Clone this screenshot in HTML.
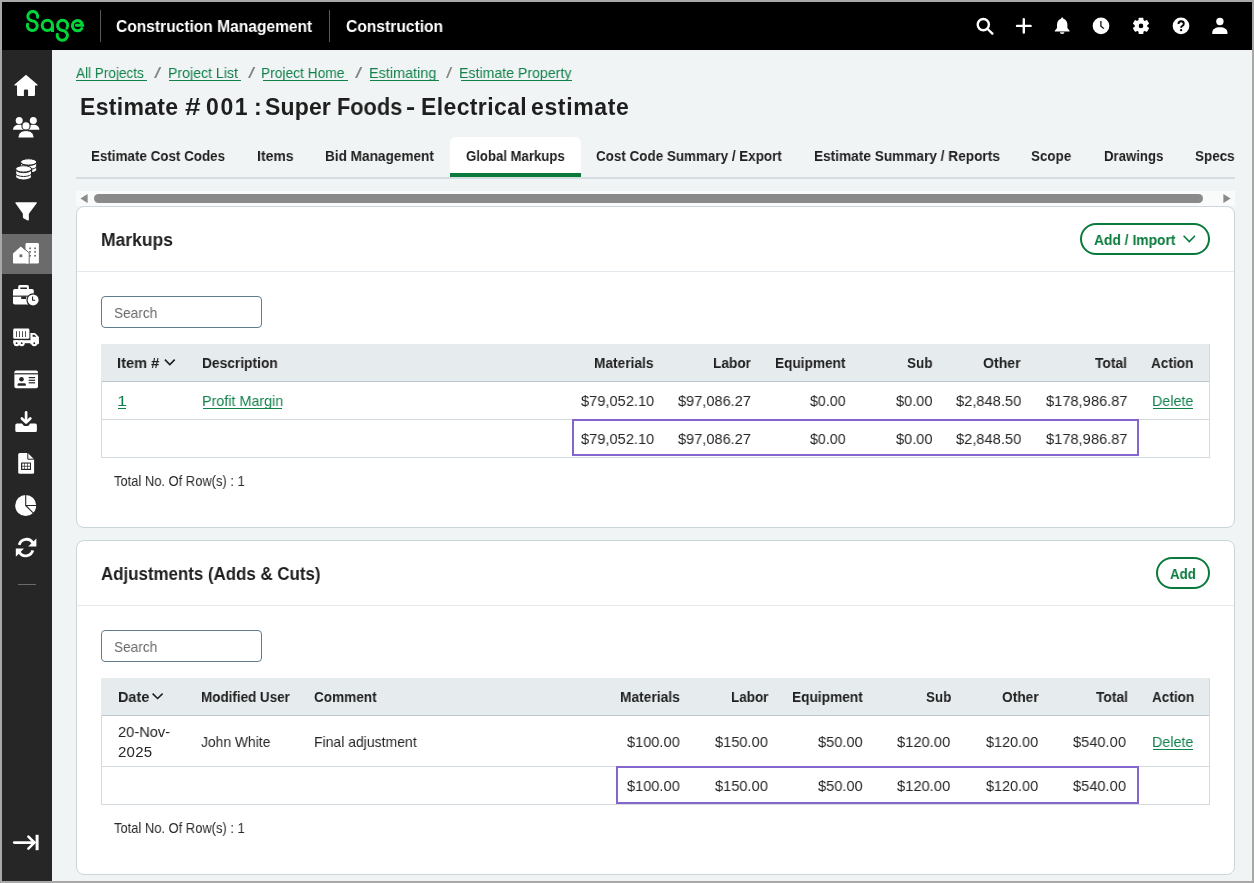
<!DOCTYPE html>
<html><head><meta charset="utf-8">
<style>
html,body{margin:0;padding:0;}
body{width:1254px;height:883px;position:relative;overflow:hidden;background:#a8a8a8;font-family:"Liberation Sans", sans-serif;}
.a{position:absolute;}
.t{position:absolute;white-space:pre;font-family:"Liberation Sans", sans-serif;will-change:transform;}
#top{left:2px;top:2px;width:1250px;height:48px;background:#000;}
#side{left:2px;top:50px;width:50px;height:831px;background:#262626;}
#main{left:52px;top:50px;width:1200px;height:831px;background:#f1f4f5;}
.card{position:absolute;background:#fff;border:1px solid #cbd5da;border-radius:8px;box-sizing:border-box;}
.hdr{position:absolute;background:#e6ebed;}
.btn{position:absolute;border:2px solid #0a7a3c;border-radius:17px;box-sizing:border-box;background:#fff;}
.search{position:absolute;border:1px solid #617d8c;border-radius:4px;box-sizing:border-box;background:#fff;}
svg{position:absolute;overflow:visible;}
</style></head><body>
<div id="top" class="a"></div>
<div id="side" class="a"></div>
<div id="main" class="a"></div>

<!-- Sage logo -->
<svg style="left:0;top:0" width="100" height="50" viewBox="0 0 100 50">
 <g fill="none" stroke="#00d639" stroke-width="3" stroke-linecap="round">
  <path d="M37.6 17.2 A4.95 4.75 0 1 0 32.5 21 A4.95 4.75 0 1 1 27.6 24.2"/>
  <circle cx="47.35" cy="25.35" r="5.15"/>
  <path d="M52.5 25.35 V32" stroke-linecap="butt"/>
  <path d="M66.9 28.2 A5.1 5.15 0 1 0 62.5 30.5 A5.1 4.9 0 1 1 57.3 34.4"/>
  <path d="M76.4 25.3 H82.6 A5.1 5.1 0 1 0 81.7 28.6"/>
 </g>
</svg>
<div class="a" style="left:100px;top:10px;width:1px;height:32px;background:#5a5a5a"></div>
<div class="a" style="left:329px;top:10px;width:1px;height:32px;background:#5a5a5a"></div>

<!-- top right icons -->
<svg style="left:0;top:0" width="1254" height="50">
 <g fill="none" stroke="#fff" stroke-width="2.4" stroke-linecap="round">
  <circle cx="983.3" cy="24.6" r="5.6"/>
  <path d="M987.6 29 L992.4 33.6"/>
  <path d="M1023.8 19.2 V32.6 M1017 25.9 H1030.6"/>
 </g>
 <g fill="#fff">
  <path d="M1062.2 17.6 c0.8 0 1.1 0.5 1.1 1.1 c2.7 0.7 4.1 3.1 4.1 6 v3.4 l2.2 2.6 v0.8 h-14.8 v-0.8 l2.2 -2.6 v-3.4 c0 -2.9 1.4 -5.3 4.1 -6 c0 -0.6 0.3 -1.1 1.1 -1.1z"/>
  <path d="M1059.9 32.2 h4.6 a2.3 1.8 0 0 1 -4.6 0z"/>
  <circle cx="1101" cy="25.9" r="8.3"/>
  <circle cx="1181" cy="25.9" r="8.3"/>
  <circle cx="1219.9" cy="21.5" r="3.7"/>
  <path d="M1212.3 34 V32.2 C1212.3 29.2 1215.4 27.2 1219.9 27.2 C1224.4 27.2 1227.4 29.2 1227.4 32.2 V34 Z"/>
 </g>
 <path d="M1100.9 21 V26.2 L1104 28.6" fill="none" stroke="#000" stroke-width="1.2"/>
 <!-- gear -->
 <g transform="translate(1141,25.9)">
  <g fill="#fff">
   <circle r="6.3"/>
   <rect x="-2.4" y="-8.2" width="4.8" height="16.4" rx="0.9"/>
   <rect x="-2.4" y="-8.2" width="4.8" height="16.4" rx="0.9" transform="rotate(60)"/>
   <rect x="-2.4" y="-8.2" width="4.8" height="16.4" rx="0.9" transform="rotate(120)"/>
  </g>
  <circle r="2.3" fill="#000"/>
 </g>
 <path d="M1178.5 24.1 Q1178.5 21.3 1181.1 21.3 Q1183.8 21.3 1183.8 23.8 Q1183.8 25.2 1182.4 25.9 Q1181.1 26.5 1181.1 27.8" fill="none" stroke="#000" stroke-width="1.9"/><circle cx="1181.1" cy="30.2" r="1.15" fill="#000"/>
</svg>

<!-- sidebar -->
<div class="a" style="left:2px;top:234px;width:50px;height:40px;background:#6b6b6b"></div>
<div class="a" style="left:18px;top:584px;width:18px;height:1px;background:#6a6a6a"></div>
<svg style="left:0;top:0" width="52" height="883">
 <g fill="#fff">
  <!-- home -->
  <path d="M26 74.8 L14.6 84.6 Q13.6 85.6 15 85.6 L17 85.6 L17 94.8 Q17 96 18.2 96 L23.9 96 L23.9 90.6 Q23.9 89.4 25.1 89.4 L26.9 89.4 Q28.1 89.4 28.1 90.6 L28.1 96 L33.8 96 Q35 96 35 94.8 L35 85.6 L37 85.6 Q38.4 85.6 37.4 84.6 Z"/>
  <!-- people -->
  <circle cx="19.2" cy="120.5" r="3.5"/><circle cx="33.3" cy="120.5" r="3.5"/>
  <path d="M13 129.8 C13 126.8 15.6 124.8 19.2 124.8 C22.8 124.8 25.4 126.8 25.4 129.8 Z"/>
  <path d="M27 129.8 C27 126.8 29.6 124.8 33.3 124.8 C37 124.8 39.4 126.8 39.4 129.8 Z"/>
  <circle cx="26" cy="125.9" r="4.1" stroke="#262626" stroke-width="1.1"/>
  <path d="M18 138 C18 133.4 21 130.6 26 130.6 C31 130.6 34 133.4 34 138 Z" stroke="#262626" stroke-width="1"/>
 </g>
 <!-- coins -->
 <g fill="#fff" stroke="#262626" stroke-width="1">
  <path d="M20.5 162 V169.8 A8.1 3.2 0 0 0 36.7 169.8 V162 Z"/>
  <ellipse cx="28.6" cy="162" rx="8.1" ry="3.2"/>
  <path d="M20.5 162.2 A8.1 3.2 0 0 0 36.7 162.2 M20.5 166.2 A8.1 3.2 0 0 0 36.7 166.2" fill="none"/>
  <path d="M15.6 168.9 V176.8 A8 3.2 0 0 0 31.6 176.8 V168.9 Z" stroke-width="1.2"/>
  <ellipse cx="23.6" cy="168.9" rx="8" ry="3.2"/>
  <path d="M15.6 169.4 A8 3.2 0 0 0 31.6 169.4 M15.6 173.3 A8 3.2 0 0 0 31.6 173.3" fill="none"/>
 </g>
 <g fill="#fff">
  <!-- funnel -->
  <path d="M16 202.3 H36.2 Q37.4 202.3 36.7 203.3 L28.85 213.8 V219.6 Q28.85 220.9 27.7 220.4 L23.9 218.6 Q22.9 218.1 22.9 217 V213.8 L15.5 203.3 Q14.8 202.3 16 202.3 Z"/>
  <!-- building -->
  <rect x="25.5" y="243.1" width="13.4" height="20.5" rx="1.3"/>
  <path d="M13 253.4 L20.9 246.6 L28.7 253 V263.6 H14.2 Q13 263.6 13 262.4 Z"/>
 </g>
 <path d="M21.2 246.2 L29.2 252.8 V263.8" fill="none" stroke="#6b6b6b" stroke-width="1"/>
 <g fill="#6b6b6b">
  <rect x="19.5" y="254.4" width="2.8" height="2.8"/>
  <rect x="29.2" y="247.5" width="1.7" height="1.7"/><rect x="34.2" y="247.5" width="1.7" height="1.7"/>
  <rect x="29.2" y="251" width="1.7" height="1.7"/><rect x="34.2" y="251" width="1.7" height="1.7"/>
  <rect x="29.2" y="254.9" width="1.7" height="1.7"/><rect x="34.2" y="254.9" width="1.7" height="1.7"/>
 </g>
 <g fill="#fff">
  <!-- briefcase -->
  <path d="M18.2 289 V286.6 Q18.2 285.1 19.7 285.1 H27.4 Q28.9 285.1 28.9 286.6 V289 H27 V287.4 H20.3 V289 Z"/>
  <rect x="13" y="289" width="20.8" height="15.5" rx="1.8"/>
 </g>
 <rect x="13" y="295.6" width="15" height="1.1" fill="#262626"/>
 <rect x="21.2" y="296.4" width="5" height="2.6" fill="#262626"/>
 <circle cx="33.1" cy="299.9" r="6.1" fill="#fff" stroke="#262626" stroke-width="1.2"/>
 <path d="M32.6 296.6 V300.2 H35.2" fill="none" stroke="#262626" stroke-width="1.1"/>
 <g fill="#fff">
  <!-- truck -->
  <rect x="13.2" y="328.6" width="16.2" height="10.2" rx="1.4"/>
  <path d="M30.4 332.9 H35 L38.9 336.9 V343 Q38.9 344.2 37.8 344.2 H30.4 Z"/>
  <rect x="13.2" y="340.2" width="25.7" height="3"/>
  <circle cx="16.6" cy="343.2" r="3"/><circle cx="21.7" cy="343.2" r="3"/><circle cx="34.3" cy="343.2" r="3"/>
 </g>
 <g fill="#262626">
  <rect x="16.1" y="331.2" width="0.8" height="5.8"/><rect x="19.1" y="331.2" width="0.8" height="5.8"/><rect x="22.1" y="331.2" width="0.8" height="5.8"/><rect x="25.1" y="331.2" width="0.8" height="5.8"/>
  <circle cx="16.6" cy="343.2" r="0.9"/><circle cx="21.7" cy="343.2" r="0.9"/><circle cx="34.3" cy="343.2" r="0.9"/>
  <path d="M32.6 334.8 H34.4 L36.4 336.8 H32.6 Z"/>
 </g>
 <g fill="#fff">
  <!-- id card -->
  <rect x="14.4" y="370.5" width="23.6" height="17.8" rx="1.8"/>
 </g>
 <g fill="#262626">
  <rect x="14.4" y="373.2" width="23.6" height="1.2"/>
  <circle cx="21.5" cy="379.3" r="2.3"/><path d="M17.6 385.8 V384.6 Q17.6 383.3 18.9 383.3 H24.5 Q25.8 383.3 25.8 384.6 V385.8 Z"/>
  <rect x="28.7" y="377" width="6.4" height="1.2"/><rect x="28.7" y="379.7" width="6.4" height="1.2"/><rect x="28.7" y="382.2" width="6.4" height="1.2"/>
 </g>
 <g fill="#fff">
  <!-- download -->
  <path d="M15.3 425.2 Q15.3 423.6 16.9 423.6 H21.6 Q22.4 423.6 22.8 424.4 Q23.6 426 25 426 H27.2 Q28.6 426 29.4 424.4 Q29.8 423.6 30.6 423.6 H35.3 Q36.9 423.6 36.9 425.2 V430.5 Q36.9 432.1 35.3 432.1 H16.9 Q15.3 432.1 15.3 430.5 Z"/>
  <!-- spreadsheet -->
  <path d="M19.8 452.9 H27.8 L34.1 459.2 V472.2 Q34.1 473.8 32.5 473.8 H19.8 Q18.2 473.8 18.2 472.2 V454.5 Q18.2 452.9 19.8 452.9 Z"/>
 </g>
 <g fill="none" stroke="#fff" stroke-width="2.7" stroke-linecap="round" stroke-linejoin="round">
  <path d="M26.1 412.4 V421.6"/><path d="M21.9 418.4 L26.1 422.4 L30.3 418.4"/>
 </g>
 <path d="M27.8 452.6 V459.2 H34.4" fill="none" stroke="#262626" stroke-width="1"/>
<g fill="#262626"><rect x="21" y="462.4" width="10" height="7.6" rx="0.6"/></g>
 <g fill="#fff"><rect x="22.2" y="463.6" width="2.2" height="2.2"/><rect x="25" y="463.6" width="2.2" height="2.2"/><rect x="27.8" y="463.6" width="2.2" height="2.2"/>
  <rect x="22.2" y="466.6" width="2.2" height="2.2"/><rect x="25" y="466.6" width="2.2" height="2.2"/><rect x="27.8" y="466.6" width="2.2" height="2.2"/></g>
 <g fill="#fff">
  <!-- pie -->
  <circle cx="25.7" cy="505.5" r="10.5"/>
 </g>
 <g stroke="#262626" stroke-width="1.1" fill="none">
  <path d="M25.7 494 V505.5 H37.5 M25.7 505.5 L33.6 513.4"/>
 </g>
 <!-- refresh -->
 <g fill="none" stroke="#fff" stroke-width="2.8">
  <path d="M19.2 544.8 A7.4 7.4 0 0 1 33 543.4"/>
  <path d="M32.8 550.4 A7.4 7.4 0 0 1 19 551.6"/>
 </g>
 <g fill="#fff">
  <path d="M36.4 538.4 V546.6 H28.2 Z"/>
  <path d="M15.8 556.8 V548.6 H24 Z"/>
 </g>
 <!-- collapse arrow -->
 <g fill="none" stroke="#fff" stroke-width="2.6" stroke-linecap="round">
  <path d="M14.2 842.6 H34"/><path d="M28.4 836.6 L34.4 842.6 L28.4 848.6"/>
 </g>
 <rect x="35.6" y="834.8" width="3" height="15.4" fill="#fff"/>
</svg>

<!-- tabs -->
<div class="a" style="left:76px;top:177px;width:1159px;height:2px;background:#d5dde1"></div>
<div class="a" style="left:450px;top:137px;width:131px;height:40px;background:#fff;border-radius:6px 6px 0 0"></div>
<div class="a" style="left:450px;top:173px;width:131px;height:4px;background:#0a7a3c"></div>

<!-- scrollbar -->
<div class="a" style="left:76px;top:191px;width:1159px;height:15px;background:#f9fafa"></div>
<div class="a" style="left:94px;top:194px;width:1109px;height:9px;background:#8a8a8a;border-radius:5px"></div>
<svg style="left:0;top:0" width="1254" height="210"><path d="M80.4 198.5 L87.6 194 V203 Z" fill="#8a8a8a"/><path d="M1230.6 198.5 L1223.4 194 V203 Z" fill="#8a8a8a"/></svg>

<!-- card 1 -->
<div class="card" style="left:76px;top:206px;width:1159px;height:322px"></div>
<div class="a" style="left:77px;top:271px;width:1157px;height:1px;background:#e3e9ec"></div>
<div class="btn" style="left:1080px;top:223px;width:130px;height:32px"></div>
<svg style="left:0;top:0" width="1254" height="300"><path d="M1183.6 235.8 L1189.3 241.5 L1195 235.8" fill="none" stroke="#0a7a3c" stroke-width="1.6"/></svg>
<div class="search" style="left:101px;top:296px;width:161px;height:32px"></div>
<div class="hdr" style="left:101px;top:344px;width:1109px;height:37px"></div>
<div class="a" style="left:101px;top:381px;width:1109px;height:1px;background:#bac7ce"></div>
<div class="a" style="left:101px;top:419px;width:1109px;height:1px;background:#d3dbe0"></div>
<div class="a" style="left:101px;top:457px;width:1109px;height:1px;background:#d3dbe0"></div>
<div class="a" style="left:101px;top:381px;width:1px;height:77px;background:#d3dbe0"></div>
<div class="a" style="left:1209px;top:344px;width:1px;height:114px;background:#d3dbe0"></div>
<div class="a" style="left:572px;top:419px;width:567px;height:37px;border:2px solid #8466cc;box-sizing:border-box"></div>
<svg style="left:0;top:0" width="1254" height="400"><path d="M164.9 359.6 L169.8 364.5 L174.7 359.6" fill="none" stroke="#1f1f1f" stroke-width="1.6"/></svg>

<!-- card 2 -->
<div class="card" style="left:76px;top:540px;width:1159px;height:335px"></div>
<div class="a" style="left:77px;top:605px;width:1157px;height:1px;background:#e3e9ec"></div>
<div class="btn" style="left:1156px;top:557px;width:54px;height:32px"></div>
<div class="search" style="left:101px;top:630px;width:161px;height:32px"></div>
<div class="hdr" style="left:101px;top:678px;width:1109px;height:37px"></div>
<div class="a" style="left:101px;top:715px;width:1109px;height:1px;background:#bac7ce"></div>
<div class="a" style="left:101px;top:766px;width:1109px;height:1px;background:#d3dbe0"></div>
<div class="a" style="left:101px;top:804px;width:1109px;height:1px;background:#d3dbe0"></div>
<div class="a" style="left:101px;top:715px;width:1px;height:90px;background:#d3dbe0"></div>
<div class="a" style="left:1209px;top:678px;width:1px;height:127px;background:#d3dbe0"></div>
<div class="a" style="left:616px;top:766px;width:523px;height:38px;border:2px solid #8466cc;box-sizing:border-box"></div>
<svg style="left:0;top:0" width="1254" height="883"><path d="M152.6 693.6 L157.6 698.5 L162.6 693.6" fill="none" stroke="#1f1f1f" stroke-width="1.6"/></svg>

<span class="t" style="left:116.40px;top:17.30px;font-size:16.5px;line-height:18.97px;font-weight:700;color:#fff;transform:scaleX(0.9430);transform-origin:0 0;">Construction Management</span>
<span class="t" style="left:346.20px;top:17.30px;font-size:16.5px;line-height:18.97px;font-weight:700;color:#fff;transform:scaleX(0.9456);transform-origin:0 0;">Construction</span>
<span class="t" style="left:75.80px;top:63.68px;font-size:15px;line-height:17.25px;font-weight:400;color:#11814a;transform:scaleX(0.9039);transform-origin:0 0;">All Projects</span>
<div class="a" style="left:76.2px;top:80px;width:70.5px;height:1px;background:#11814a"></div>
<span class="t" style="left:154.00px;top:63.68px;font-size:15px;line-height:17.25px;font-weight:400;color:#858585;transform:scaleX(1.7500);transform-origin:0 0;">/</span>
<span class="t" style="left:167.60px;top:63.68px;font-size:15px;line-height:17.25px;font-weight:400;color:#11814a;transform:scaleX(0.9425);transform-origin:0 0;">Project List</span>
<div class="a" style="left:168.9px;top:80px;width:71.7px;height:1px;background:#11814a"></div>
<span class="t" style="left:248.00px;top:63.68px;font-size:15px;line-height:17.25px;font-weight:400;color:#858585;transform:scaleX(1.7500);transform-origin:0 0;">/</span>
<span class="t" style="left:261.40px;top:63.68px;font-size:15px;line-height:17.25px;font-weight:400;color:#11814a;transform:scaleX(0.9186);transform-origin:0 0;">Project Home</span>
<div class="a" style="left:262.6px;top:80px;width:85.3px;height:1px;background:#11814a"></div>
<span class="t" style="left:355.00px;top:63.68px;font-size:15px;line-height:17.25px;font-weight:400;color:#858585;transform:scaleX(1.7500);transform-origin:0 0;">/</span>
<span class="t" style="left:368.80px;top:63.68px;font-size:15px;line-height:17.25px;font-weight:400;color:#11814a;transform:scaleX(0.9618);transform-origin:0 0;">Estimating</span>
<div class="a" style="left:369.7px;top:80px;width:69.0px;height:1px;background:#11814a"></div>
<span class="t" style="left:446.00px;top:63.68px;font-size:15px;line-height:17.25px;font-weight:400;color:#858585;transform:scaleX(1.5000);transform-origin:0 0;">/</span>
<span class="t" style="left:459.00px;top:63.68px;font-size:15px;line-height:17.25px;font-weight:400;color:#11814a;transform:scaleX(0.9432);transform-origin:0 0;">Estimate Property</span>
<div class="a" style="left:460.5px;top:80px;width:111.1px;height:1px;background:#11814a"></div>
<span class="t" style="left:80.40px;top:94.31px;font-size:23px;line-height:26.45px;font-weight:700;color:#1e1e1e;letter-spacing:0.314px;">Estimate</span>
<span class="t" style="left:185.20px;top:94.31px;font-size:23px;line-height:26.45px;font-weight:700;color:#1e1e1e;transform:scaleX(1.2168);transform-origin:0 0;">#</span>
<span class="t" style="left:206.40px;top:94.31px;font-size:23px;line-height:26.45px;font-weight:700;color:#1e1e1e;letter-spacing:1.600px;">001</span>
<span class="t" style="left:253.60px;top:94.31px;font-size:23px;line-height:26.45px;font-weight:700;color:#1e1e1e;">:</span>
<span class="t" style="left:265.00px;top:94.31px;font-size:23px;line-height:26.45px;font-weight:700;color:#1e1e1e;letter-spacing:0.150px;">Super</span>
<span class="t" style="left:337.20px;top:94.31px;font-size:23px;line-height:26.45px;font-weight:700;color:#1e1e1e;transform:scaleX(0.9451);transform-origin:0 0;">Foods</span>
<span class="t" style="left:406.00px;top:94.31px;font-size:23px;line-height:26.45px;font-weight:700;color:#1e1e1e;transform:scaleX(1.1985);transform-origin:0 0;">-</span>
<span class="t" style="left:421.40px;top:94.31px;font-size:23px;line-height:26.45px;font-weight:700;color:#1e1e1e;letter-spacing:0.378px;">Electrical</span>
<span class="t" style="left:530.60px;top:94.31px;font-size:23px;line-height:26.45px;font-weight:700;color:#1e1e1e;letter-spacing:0.643px;">estimate</span>
<span class="t" style="left:91.40px;top:146.68px;font-size:15px;line-height:17.25px;font-weight:700;color:#1f1f1f;transform:scaleX(0.8933);transform-origin:0 0;">Estimate Cost Codes</span>
<span class="t" style="left:257.20px;top:146.68px;font-size:15px;line-height:17.25px;font-weight:700;color:#1f1f1f;transform:scaleX(0.9344);transform-origin:0 0;">Items</span>
<span class="t" style="left:325.00px;top:146.68px;font-size:15px;line-height:17.25px;font-weight:700;color:#1f1f1f;transform:scaleX(0.9076);transform-origin:0 0;">Bid Management</span>
<span class="t" style="left:465.80px;top:146.68px;font-size:15px;line-height:17.25px;font-weight:700;color:#1f1f1f;transform:scaleX(0.8775);transform-origin:0 0;">Global Markups</span>
<span class="t" style="left:596.40px;top:146.68px;font-size:15px;line-height:17.25px;font-weight:700;color:#1f1f1f;transform:scaleX(0.8951);transform-origin:0 0;">Cost Code Summary / Export</span>
<span class="t" style="left:814.00px;top:146.68px;font-size:15px;line-height:17.25px;font-weight:700;color:#1f1f1f;transform:scaleX(0.9099);transform-origin:0 0;">Estimate Summary / Reports</span>
<span class="t" style="left:1031.00px;top:146.68px;font-size:15px;line-height:17.25px;font-weight:700;color:#1f1f1f;transform:scaleX(0.8932);transform-origin:0 0;">Scope</span>
<span class="t" style="left:1104.00px;top:146.68px;font-size:15px;line-height:17.25px;font-weight:700;color:#1f1f1f;transform:scaleX(0.8788);transform-origin:0 0;">Drawings</span>
<span class="t" style="left:1195.20px;top:146.68px;font-size:15px;line-height:17.25px;font-weight:700;color:#1f1f1f;transform:scaleX(0.8977);transform-origin:0 0;">Specs</span>
<span class="t" style="left:101.20px;top:229.91px;font-size:18px;line-height:20.7px;font-weight:700;color:#1e1e1e;transform:scaleX(0.9722);transform-origin:0 0;">Markups</span>
<span class="t" style="left:1094.00px;top:230.68px;font-size:15px;line-height:17.25px;font-weight:700;color:#0a7a3c;transform:scaleX(0.9228);transform-origin:0 0;">Add / Import</span>
<span class="t" style="left:113.60px;top:303.68px;font-size:15px;line-height:17.25px;font-weight:400;color:#6a6a6a;transform:scaleX(0.9088);transform-origin:0 0;">Search</span>
<span class="t" style="left:117.00px;top:353.68px;font-size:15px;line-height:17.25px;font-weight:700;color:#1f1f1f;transform:scaleX(0.9740);transform-origin:0 0;">Item #</span>
<span class="t" style="left:201.80px;top:353.68px;font-size:15px;line-height:17.25px;font-weight:700;color:#1f1f1f;transform:scaleX(0.9186);transform-origin:0 0;">Description</span>
<span class="t" style="left:593.80px;top:353.68px;font-size:15px;line-height:17.25px;font-weight:700;color:#1f1f1f;transform:scaleX(0.9141);transform-origin:0 0;">Materials</span>
<span class="t" style="left:713.00px;top:353.68px;font-size:15px;line-height:17.25px;font-weight:700;color:#1f1f1f;transform:scaleX(0.9101);transform-origin:0 0;">Labor</span>
<span class="t" style="left:775.00px;top:353.68px;font-size:15px;line-height:17.25px;font-weight:700;color:#1f1f1f;transform:scaleX(0.9093);transform-origin:0 0;">Equipment</span>
<span class="t" style="left:907.40px;top:353.68px;font-size:15px;line-height:17.25px;font-weight:700;color:#1f1f1f;transform:scaleX(0.9000);transform-origin:0 0;">Sub</span>
<span class="t" style="left:983.40px;top:353.68px;font-size:15px;line-height:17.25px;font-weight:700;color:#1f1f1f;transform:scaleX(0.9385);transform-origin:0 0;">Other</span>
<span class="t" style="left:1095.00px;top:353.68px;font-size:15px;line-height:17.25px;font-weight:700;color:#1f1f1f;transform:scaleX(0.9206);transform-origin:0 0;">Total</span>
<span class="t" style="left:1151.40px;top:353.68px;font-size:15px;line-height:17.25px;font-weight:700;color:#1f1f1f;transform:scaleX(0.9088);transform-origin:0 0;">Action</span>
<span class="t" style="left:116.80px;top:391.68px;font-size:15px;line-height:17.25px;font-weight:400;color:#11814a;transform:scaleX(1.2106);transform-origin:0 0;">1</span>
<div class="a" style="left:118.2px;top:408px;width:8.3px;height:1px;background:#11814a"></div>
<span class="t" style="left:201.80px;top:391.68px;font-size:15px;line-height:17.25px;font-weight:400;color:#11814a;transform:scaleX(0.9554);transform-origin:0 0;">Profit Margin</span>
<div class="a" style="left:202.5px;top:408px;width:79.5px;height:1px;background:#11814a"></div>
<span class="t" style="left:581.00px;top:391.68px;font-size:15px;line-height:17.25px;font-weight:400;color:#262626;transform:scaleX(0.9747);transform-origin:0 0;">$79,052.10</span>
<span class="t" style="left:677.80px;top:391.68px;font-size:15px;line-height:17.25px;font-weight:400;color:#262626;transform:scaleX(0.9704);transform-origin:0 0;">$97,086.27</span>
<span class="t" style="left:810.00px;top:391.68px;font-size:15px;line-height:17.25px;font-weight:400;color:#262626;transform:scaleX(0.9489);transform-origin:0 0;">$0.00</span>
<span class="t" style="left:895.80px;top:391.68px;font-size:15px;line-height:17.25px;font-weight:400;color:#262626;transform:scaleX(0.9730);transform-origin:0 0;">$0.00</span>
<span class="t" style="left:956.20px;top:391.68px;font-size:15px;line-height:17.25px;font-weight:400;color:#262626;transform:scaleX(0.9773);transform-origin:0 0;">$2,848.50</span>
<span class="t" style="left:1045.60px;top:391.68px;font-size:15px;line-height:17.25px;font-weight:400;color:#262626;transform:scaleX(0.9772);transform-origin:0 0;">$178,986.87</span>
<span class="t" style="left:581.00px;top:429.68px;font-size:15px;line-height:17.25px;font-weight:400;color:#262626;transform:scaleX(0.9747);transform-origin:0 0;">$79,052.10</span>
<span class="t" style="left:677.80px;top:429.68px;font-size:15px;line-height:17.25px;font-weight:400;color:#262626;transform:scaleX(0.9704);transform-origin:0 0;">$97,086.27</span>
<span class="t" style="left:810.00px;top:429.68px;font-size:15px;line-height:17.25px;font-weight:400;color:#262626;transform:scaleX(0.9489);transform-origin:0 0;">$0.00</span>
<span class="t" style="left:895.80px;top:429.68px;font-size:15px;line-height:17.25px;font-weight:400;color:#262626;transform:scaleX(0.9730);transform-origin:0 0;">$0.00</span>
<span class="t" style="left:956.20px;top:429.68px;font-size:15px;line-height:17.25px;font-weight:400;color:#262626;transform:scaleX(0.9773);transform-origin:0 0;">$2,848.50</span>
<span class="t" style="left:1045.60px;top:429.68px;font-size:15px;line-height:17.25px;font-weight:400;color:#262626;transform:scaleX(0.9772);transform-origin:0 0;">$178,986.87</span>
<span class="t" style="left:1152.00px;top:391.68px;font-size:15px;line-height:17.25px;font-weight:400;color:#11814a;transform:scaleX(0.9550);transform-origin:0 0;">Delete</span>
<div class="a" style="left:1153.0px;top:408px;width:40.0px;height:1px;background:#11814a"></div>
<span class="t" style="left:114.20px;top:471.68px;font-size:15px;line-height:17.25px;font-weight:400;color:#2a2a2a;transform:scaleX(0.8623);transform-origin:0 0;">Total No. Of Row(s) : 1</span>
<span class="t" style="left:100.80px;top:563.91px;font-size:18px;line-height:20.7px;font-weight:700;color:#1e1e1e;transform:scaleX(0.9379);transform-origin:0 0;">Adjustments (Adds &amp; Cuts)</span>
<span class="t" style="left:1170.00px;top:564.68px;font-size:15px;line-height:17.25px;font-weight:700;color:#0a7a3c;transform:scaleX(0.8861);transform-origin:0 0;">Add</span>
<span class="t" style="left:113.60px;top:637.68px;font-size:15px;line-height:17.25px;font-weight:400;color:#6a6a6a;transform:scaleX(0.9088);transform-origin:0 0;">Search</span>
<span class="t" style="left:117.60px;top:687.68px;font-size:15px;line-height:17.25px;font-weight:700;color:#1f1f1f;transform:scaleX(0.9616);transform-origin:0 0;">Date</span>
<span class="t" style="left:200.80px;top:687.68px;font-size:15px;line-height:17.25px;font-weight:700;color:#1f1f1f;transform:scaleX(0.8960);transform-origin:0 0;">Modified User</span>
<span class="t" style="left:314.40px;top:687.68px;font-size:15px;line-height:17.25px;font-weight:700;color:#1f1f1f;transform:scaleX(0.9045);transform-origin:0 0;">Comment</span>
<span class="t" style="left:619.80px;top:687.68px;font-size:15px;line-height:17.25px;font-weight:700;color:#1f1f1f;transform:scaleX(0.9188);transform-origin:0 0;">Materials</span>
<span class="t" style="left:730.60px;top:687.68px;font-size:15px;line-height:17.25px;font-weight:700;color:#1f1f1f;transform:scaleX(0.8978);transform-origin:0 0;">Labor</span>
<span class="t" style="left:792.20px;top:687.68px;font-size:15px;line-height:17.25px;font-weight:700;color:#1f1f1f;transform:scaleX(0.9132);transform-origin:0 0;">Equipment</span>
<span class="t" style="left:926.20px;top:687.68px;font-size:15px;line-height:17.25px;font-weight:700;color:#1f1f1f;transform:scaleX(0.8932);transform-origin:0 0;">Sub</span>
<span class="t" style="left:1001.60px;top:687.68px;font-size:15px;line-height:17.25px;font-weight:700;color:#1f1f1f;transform:scaleX(0.9154);transform-origin:0 0;">Other</span>
<span class="t" style="left:1095.60px;top:687.68px;font-size:15px;line-height:17.25px;font-weight:700;color:#1f1f1f;transform:scaleX(0.9206);transform-origin:0 0;">Total</span>
<span class="t" style="left:1152.20px;top:687.68px;font-size:15px;line-height:17.25px;font-weight:700;color:#1f1f1f;transform:scaleX(0.9044);transform-origin:0 0;">Action</span>
<span class="t" style="left:117.60px;top:722.68px;font-size:15px;line-height:17.25px;font-weight:400;color:#262626;transform:scaleX(0.9770);transform-origin:0 0;">20-Nov-</span>
<span class="t" style="left:117.60px;top:742.68px;font-size:15px;line-height:17.25px;font-weight:400;color:#262626;letter-spacing:0.267px;">2025</span>
<span class="t" style="left:200.80px;top:732.68px;font-size:15px;line-height:17.25px;font-weight:400;color:#262626;transform:scaleX(0.9244);transform-origin:0 0;">John White</span>
<span class="t" style="left:314.40px;top:732.68px;font-size:15px;line-height:17.25px;font-weight:400;color:#262626;transform:scaleX(0.9322);transform-origin:0 0;">Final adjustment</span>
<span class="t" style="left:627.20px;top:732.68px;font-size:15px;line-height:17.25px;font-weight:400;color:#262626;transform:scaleX(0.9723);transform-origin:0 0;">$100.00</span>
<span class="t" style="left:715.00px;top:732.68px;font-size:15px;line-height:17.25px;font-weight:400;color:#262626;transform:scaleX(0.9741);transform-origin:0 0;">$150.00</span>
<span class="t" style="left:818.00px;top:732.68px;font-size:15px;line-height:17.25px;font-weight:400;color:#262626;transform:scaleX(0.9736);transform-origin:0 0;">$50.00</span>
<span class="t" style="left:897.00px;top:732.68px;font-size:15px;line-height:17.25px;font-weight:400;color:#262626;transform:scaleX(0.9815);transform-origin:0 0;">$120.00</span>
<span class="t" style="left:986.00px;top:732.68px;font-size:15px;line-height:17.25px;font-weight:400;color:#262626;transform:scaleX(0.9612);transform-origin:0 0;">$120.00</span>
<span class="t" style="left:1073.40px;top:732.68px;font-size:15px;line-height:17.25px;font-weight:400;color:#262626;transform:scaleX(0.9759);transform-origin:0 0;">$540.00</span>
<span class="t" style="left:627.20px;top:776.68px;font-size:15px;line-height:17.25px;font-weight:400;color:#262626;transform:scaleX(0.9723);transform-origin:0 0;">$100.00</span>
<span class="t" style="left:715.00px;top:776.68px;font-size:15px;line-height:17.25px;font-weight:400;color:#262626;transform:scaleX(0.9741);transform-origin:0 0;">$150.00</span>
<span class="t" style="left:818.00px;top:776.68px;font-size:15px;line-height:17.25px;font-weight:400;color:#262626;transform:scaleX(0.9736);transform-origin:0 0;">$50.00</span>
<span class="t" style="left:897.00px;top:776.68px;font-size:15px;line-height:17.25px;font-weight:400;color:#262626;transform:scaleX(0.9815);transform-origin:0 0;">$120.00</span>
<span class="t" style="left:986.00px;top:776.68px;font-size:15px;line-height:17.25px;font-weight:400;color:#262626;transform:scaleX(0.9612);transform-origin:0 0;">$120.00</span>
<span class="t" style="left:1073.40px;top:776.68px;font-size:15px;line-height:17.25px;font-weight:400;color:#262626;transform:scaleX(0.9759);transform-origin:0 0;">$540.00</span>
<span class="t" style="left:1152.20px;top:732.68px;font-size:15px;line-height:17.25px;font-weight:400;color:#11814a;transform:scaleX(0.9550);transform-origin:0 0;">Delete</span>
<div class="a" style="left:1153.3px;top:749px;width:39.7px;height:1px;background:#11814a"></div>
<span class="t" style="left:114.20px;top:818.68px;font-size:15px;line-height:17.25px;font-weight:400;color:#2a2a2a;transform:scaleX(0.8623);transform-origin:0 0;">Total No. Of Row(s) : 1</span>
</body></html>
